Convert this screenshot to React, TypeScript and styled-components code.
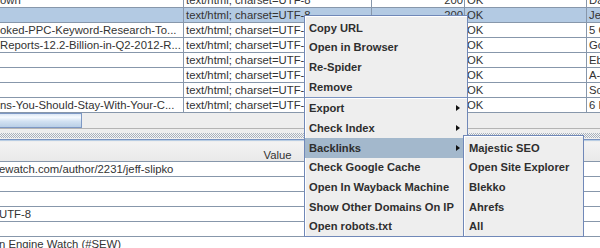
import React from "react";
import styled, { createGlobalStyle } from "styled-components";

const GlobalStyle = createGlobalStyle`
  html, body {
    margin: 0;
    padding: 0;
    background: #eeeeee;
  }
  body {
    font-family: "Liberation Sans", Arial, sans-serif;
    font-size: 11.3px;
    color: #333333;
  }
`;

const GRID = "#8797ab";

const Screen = styled.div`
  position: relative;
  width: 600px;
  height: 248px;
  overflow: hidden;
  background: #eeeeee;
  display: flex;
  flex-direction: column;
`;

/* ---------- top results table ---------- */
const TopViewport = styled.div`
  flex: none;
  height: 113px;
  overflow: hidden;
`;

const TopRows = styled.div`
  margin-top: -7px;
`;

const TopRow = styled.div<{ $selected?: boolean }>`
  display: grid;
  grid-template-columns: 184px 188px 93px 122px 1fr;
  height: 15px;
  box-sizing: border-box;
  border-bottom: 1px solid ${GRID};
  background: ${(p) => (p.$selected ? "#b3cae3" : "#ffffff")};
`;

const Cell = styled.div<{ $align?: "left" | "right"; $padL?: number; $padR?: number; $last?: boolean }>`
  box-sizing: border-box;
  border-right: ${(p) => (p.$last ? "none" : `1px solid ${GRID}`)};
  line-height: 14px;
  white-space: nowrap;
  overflow: hidden;
  text-align: ${(p) => p.$align ?? "left"};
  padding-left: ${(p) => p.$padL ?? 0}px;
  padding-right: ${(p) => p.$padR ?? 0}px;
`;

/* ---------- horizontal scrollbar ---------- */
const HScroll = styled.div`
  flex: none;
  height: 15px;
  display: flex;
  background: #eeeeee;
`;

const Thumb = styled.div`
  width: 82px;
  box-sizing: border-box;
  border: 1px solid #7d98c4;
  border-left: none;
  background: linear-gradient(
    to bottom,
    #dbe7f4 0%,
    #f7fbff 25%,
    #d3e2f2 55%,
    #b9cfe6 100%
  );
`;

/* ---------- split pane divider ---------- */
const Divider = styled.div`
  flex: none;
  height: 11px;
  box-sizing: border-box;
  border-top: 1px solid #b4b4b4;
  padding-top: 4px;
  background: #eeeeee;
`;

const Bumps = styled.div`
  height: 5px;
  background-color: #f4f4f4;
  background-image: conic-gradient(
    #a9b2bd 25%,
    transparent 0 50%,
    #a9b2bd 0 75%,
    transparent 0
  );
  background-size: 2px 2px;
`;

/* ---------- lower properties table ---------- */
const LowerPane = styled.div`
  flex: 1;
  display: flex;
  flex-direction: column;
  border-top: 1px solid #7892c0;
  box-shadow: inset 0 1px 0 #b8cde4;
  padding-top: 2px;
`;

const HeaderRow = styled.div`
  height: 20px;
  box-sizing: border-box;
  padding: 7px 45px 0 0;
  line-height: 12px;
  text-align: center;
  border-bottom: 1px solid ${GRID};
  background: linear-gradient(to bottom, #f3f3f3, #e9e9e9);
`;

const ValueRow = styled.div`
  height: 15px;
  box-sizing: border-box;
  line-height: 14px;
  white-space: nowrap;
  overflow: hidden;
  text-indent: -1px;
  border-bottom: 1px solid ${GRID};
  background: #ffffff;
`;

/* ---------- popup menus ---------- */
const Menu = styled.div<{ $left: number; $top: number; $width: number }>`
  position: absolute;
  left: ${(p) => p.$left}px;
  top: ${(p) => p.$top}px;
  width: ${(p) => p.$width}px;
  box-sizing: border-box;
  padding: 2px 0 0;
  background: #eeeeee;
  border: 1px solid #7088b8;
  box-shadow: inset 1px 1px 0 #ffffff;
`;

const Item = styled.div<{ $active?: boolean; $pad?: number }>`
  height: 19.66px;
  display: flex;
  align-items: center;
  padding-left: ${(p) => p.$pad ?? 4}px;
  font-size: 11.15px;
  font-weight: bold;
  white-space: nowrap;
  color: #2e2e2e;
  background: ${(p) => (p.$active ? "#a3b8cc" : "transparent")};
`;

const Arrow = styled.span`
  margin-left: auto;
  margin-right: 7px;
  width: 0;
  height: 0;
  border-top: 3.5px solid transparent;
  border-bottom: 3.5px solid transparent;
  border-left: 4px solid #111111;
`;

const Separator = styled.div`
  height: 2px;
  box-sizing: border-box;
  border-top: 1px solid #7a93c0;
  background: #ffffff;
`;

type TopData = { name: string; type: string; code: string; status: string; title: string };

const topRows: TopData[] = [
  { name: "own", type: "text/html; charset=UTF-8", code: "200", status: "OK", title: "Daily SearchCast" },
  { name: "", type: "text/html; charset=UTF-8", code: "200", status: "OK", title: "Jeff Slipko" },
  { name: "oked-PPC-Keyword-Research-To...", type: "text/html; charset=UTF-8", code: "200", status: "OK", title: "5 Google" },
  { name: "Reports-12.2-Billion-in-Q2-2012-R...", type: "text/html; charset=UTF-8", code: "200", status: "OK", title: "Google" },
  { name: "", type: "text/html; charset=UTF-8", code: "200", status: "OK", title: "Ebay" },
  { name: "", type: "text/html; charset=UTF-8", code: "200", status: "OK", title: "A-Z" },
  { name: "", type: "text/html; charset=UTF-8", code: "200", status: "OK", title: "Scott" },
  { name: "ns-You-Should-Stay-With-Your-C...", type: "text/html; charset=UTF-8", code: "200", status: "OK", title: "6 Facts" },
];

const lowerRows = [
  "ewatch.com/author/2231/jeff-slipko",
  "",
  "",
  "UTF-8",
  "",
  "n Engine Watch (#SEW)",
];

type MenuEntry = { label: string; sub?: boolean; active?: boolean; sep?: boolean };

const mainMenu: MenuEntry[] = [
  { label: "Copy URL" },
  { label: "Open in Browser" },
  { label: "Re-Spider" },
  { label: "Remove" },
  { label: "", sep: true },
  { label: "Export", sub: true },
  { label: "Check Index", sub: true },
  { label: "Backlinks", sub: true, active: true },
  { label: "Check Google Cache" },
  { label: "Open In Wayback Machine" },
  { label: "Show Other Domains On IP" },
  { label: "Open robots.txt" },
];

const backlinksMenu = ["Majestic SEO", "Open Site Explorer", "Blekko", "Ahrefs", "All"];

export default function App() {
  return (
    <>
      <GlobalStyle />
      <Screen>
        <TopViewport>
          <TopRows>
            {topRows.map((r, i) => (
              <TopRow key={i} $selected={i === 1}>
                <Cell>{r.name}</Cell>
                <Cell $padL={2}>{r.type}</Cell>
                <Cell $align="right" $padR={1}>{r.code}</Cell>
                <Cell $padL={2}>{r.status}</Cell>
                <Cell $padL={2} $last>{r.title}</Cell>
              </TopRow>
            ))}
          </TopRows>
        </TopViewport>

        <HScroll>
          <Thumb />
        </HScroll>

        <Divider>
          <Bumps />
        </Divider>

        <LowerPane>
          <HeaderRow>Value</HeaderRow>
          {lowerRows.map((v, i) => (
            <ValueRow key={i}>{v}</ValueRow>
          ))}
        </LowerPane>

        <Menu $left={304} $top={15} $width={164}>
          {mainMenu.map((m, i) =>
            m.sep ? (
              <Separator key={i} />
            ) : (
              <Item key={i} $active={m.active}>
                {m.label}
                {m.sub && <Arrow />}
              </Item>
            )
          )}
        </Menu>

        <Menu $left={463} $top={135} $width={121}>
          {backlinksMenu.map((label) => (
            <Item key={label} $pad={5}>
              {label}
            </Item>
          ))}
        </Menu>
      </Screen>
    </>
  );
}
